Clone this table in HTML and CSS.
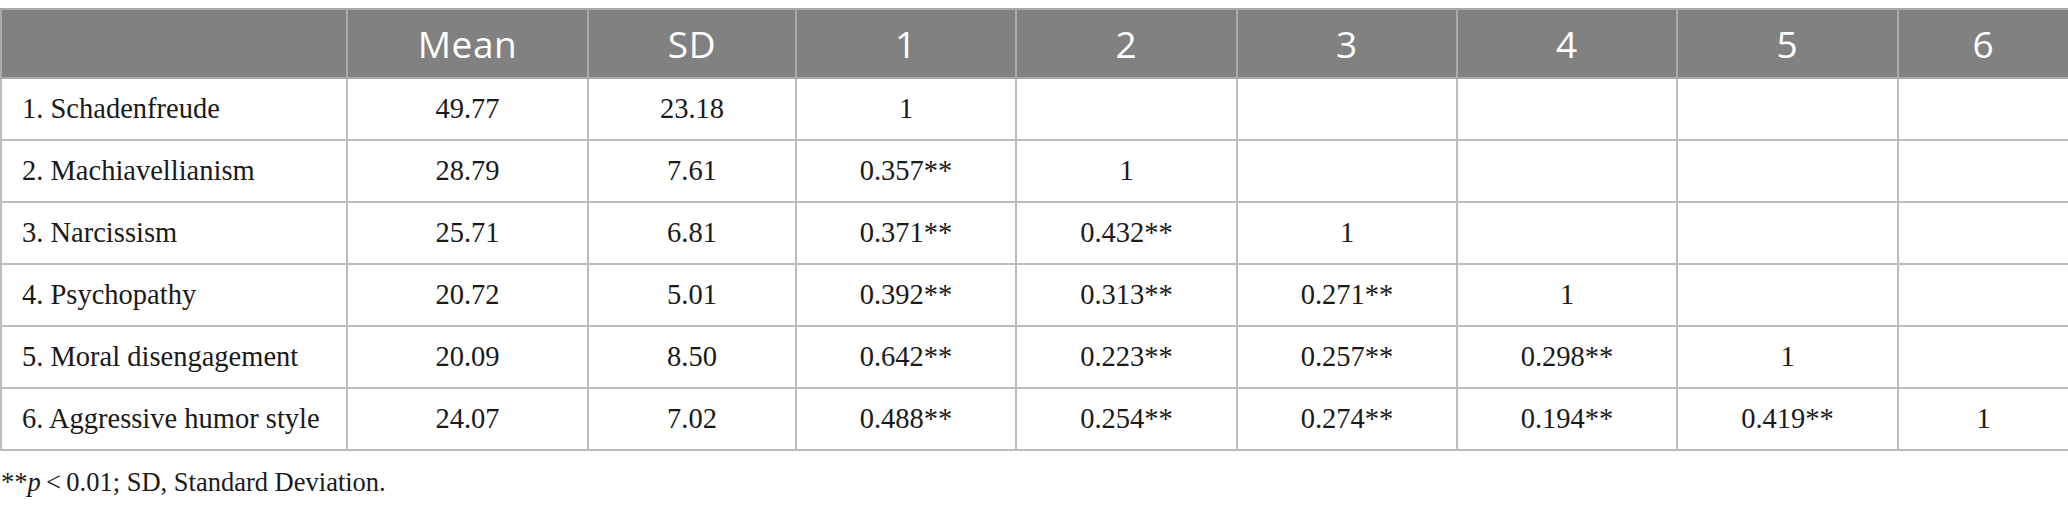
FILE: index.html
```html
<!DOCTYPE html>
<html>
<head>
<meta charset="utf-8">
<link rel="stylesheet" href="styles.css">
</head>
<body>
<table class="corr">
  <colgroup>
    <col class="c-label"><col class="c-mean"><col class="c-sd"><col class="c-n"><col class="c-n2"><col class="c-n"><col class="c-n"><col class="c-n2"><col class="c-last">
  </colgroup>
  <thead>
    <tr><th></th><th>Mean</th><th>SD</th><th>1</th><th>2</th><th>3</th><th>4</th><th>5</th><th>6</th></tr>
  </thead>
  <tbody>
    <tr><td class="label">1. Schadenfreude</td><td>49.77</td><td>23.18</td><td>1</td><td></td><td></td><td></td><td></td><td></td></tr>
    <tr><td class="label">2. Machiavellianism</td><td>28.79</td><td>7.61</td><td>0.357**</td><td>1</td><td></td><td></td><td></td><td></td></tr>
    <tr><td class="label">3. Narcissism</td><td>25.71</td><td>6.81</td><td>0.371**</td><td>0.432**</td><td>1</td><td></td><td></td><td></td></tr>
    <tr><td class="label">4. Psychopathy</td><td>20.72</td><td>5.01</td><td>0.392**</td><td>0.313**</td><td>0.271**</td><td>1</td><td></td><td></td></tr>
    <tr><td class="label">5. Moral disengagement</td><td>20.09</td><td>8.50</td><td>0.642**</td><td>0.223**</td><td>0.257**</td><td>0.298**</td><td>1</td><td></td></tr>
    <tr><td class="label">6. Aggressive humor style</td><td>24.07</td><td>7.02</td><td>0.488**</td><td>0.254**</td><td>0.274**</td><td>0.194**</td><td>0.419**</td><td>1</td></tr>
  </tbody>
</table>
<p class="note">**<i>p</i>&#8201;&lt;&#8201;0.01; SD, Standard Deviation.</p>
</body>
</html>
```

FILE: styles.css
```css
html, body {
  margin: 0;
  padding: 0;
  background: #ffffff;
}
body {
  padding-top: 8px;
  font-family: "Liberation Serif", "Times New Roman", serif;
  color: #1a1a1a;
}
.corr {
  width: 2068px;
  table-layout: fixed;
  border-collapse: collapse;
}
.c-label { width: 346px; }
.c-mean { width: 241px; }
.c-sd { width: 208px; }
.c-n { width: 220px; }
.c-n2 { width: 221px; }
.c-last { width: 171px; }
.corr th {
  height: 67px;
  padding: 0;
  background: #808180;
  color: #ffffff;
  font-family: "Open Sans", "Noto Sans", sans-serif;
  font-weight: 400;
  font-size: 37px;
  letter-spacing: 0.6px;
  text-align: center;
  vertical-align: middle;
  border: 2px solid #a9a9a9;
  line-height: 1;
}
.corr td {
  height: 60px;
  padding: 0;
  font-size: 28.5px;
  text-align: center;
  vertical-align: middle;
  border: 2px solid #bdbdbd;
  line-height: 1;
}
.corr td.label {
  text-align: left;
  padding-left: 20px;
}
.note {
  margin: 16px 0 0 1px;
  font-size: 26.5px;
  line-height: 30px;
  color: #1a1a1a;
}
```
